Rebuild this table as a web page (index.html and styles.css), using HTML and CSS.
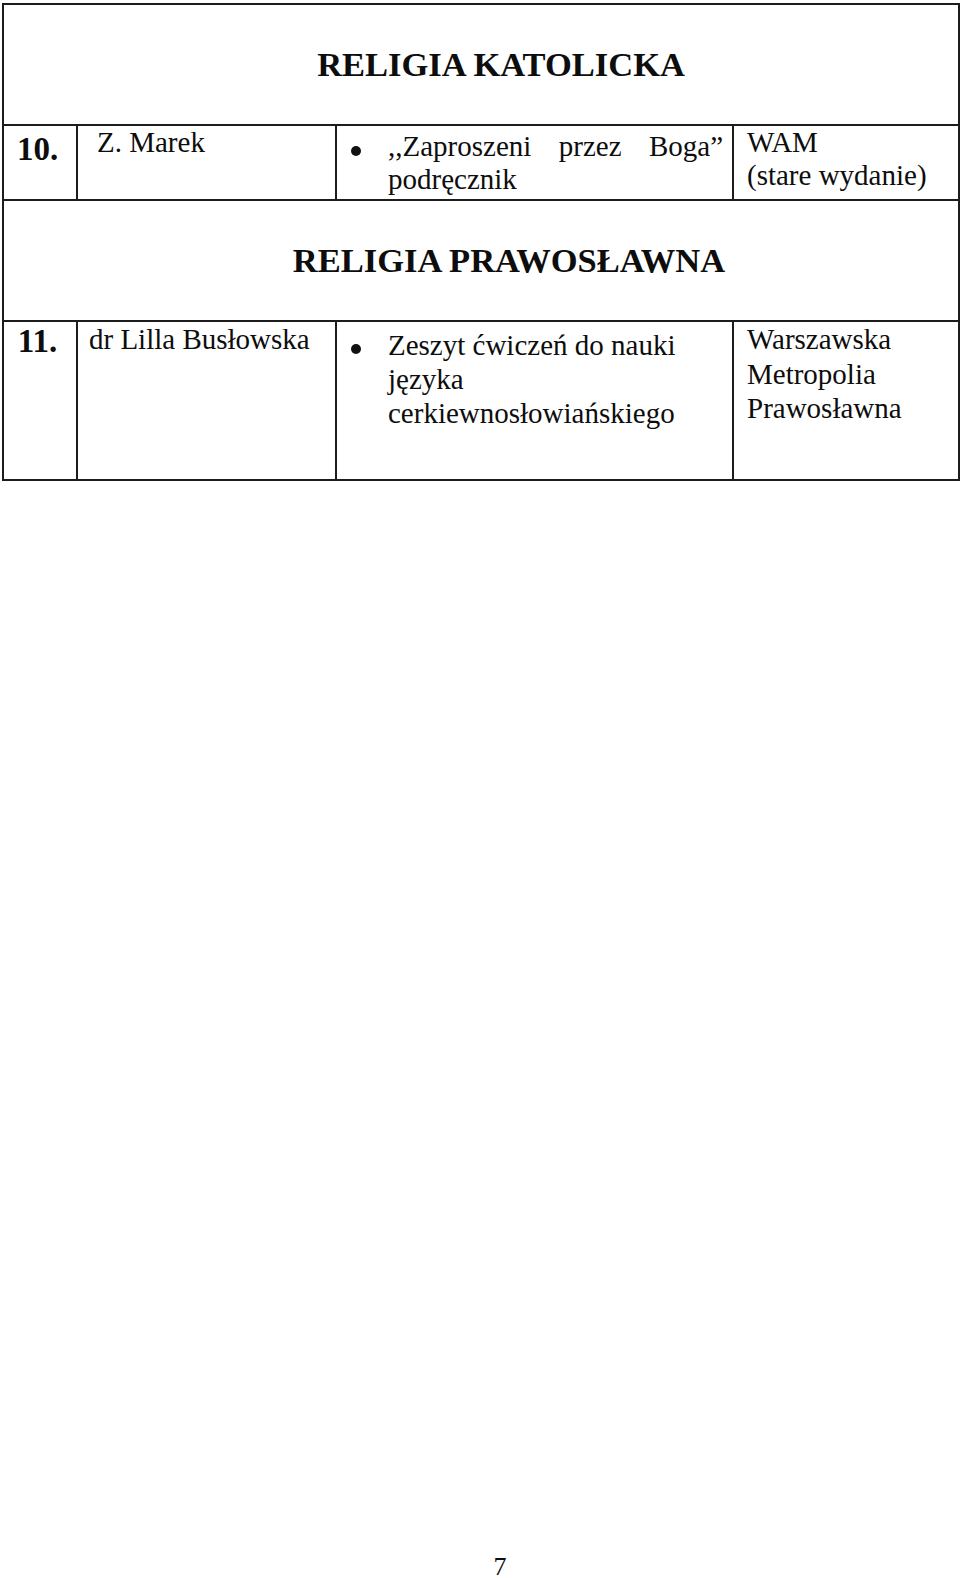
FILE: index.html
```html
<!DOCTYPE html>
<html lang="pl">
<head>
<meta charset="utf-8">
<title>Religia</title>
<link rel="stylesheet" href="styles.css">
</head>
<body>
<div class="page">
  <table class="list">
    <colgroup>
      <col class="c1"><col class="c2"><col class="c3"><col class="c4">
    </colgroup>
    <tr class="head">
      <td colspan="4" class="head-cell kat">RELIGIA KATOLICKA</td>
    </tr>
    <tr class="row r10">
      <td class="num">10.</td>
      <td class="author">Z. Marek</td>
      <td class="title">
        <div class="bullet-item"><span class="bullet"></span><span class="text justify">,,Zaproszeni przez Boga” podręcznik</span></div>
      </td>
      <td class="publisher">WAM<br>(stare wydanie)</td>
    </tr>
    <tr class="head">
      <td colspan="4" class="head-cell pra">RELIGIA PRAWOSŁAWNA</td>
    </tr>
    <tr class="row r11">
      <td class="num">11.</td>
      <td class="author">dr Lilla Busłowska</td>
      <td class="title">
        <div class="bullet-item"><span class="bullet"></span><span class="text">Zeszyt ćwiczeń do nauki języka cerkiewnosłowiańskiego</span></div>
      </td>
      <td class="publisher">Warszawska Metropolia Prawosławna</td>
    </tr>
  </table>
  <div class="page-number">7</div>
</div>
</body>
</html>
```

FILE: styles.css
```css
html, body {
  margin: 0;
  padding: 0;
  background: #ffffff;
}

body {
  font-family: "Liberation Serif", "Times New Roman", serif;
  color: #0d0d0d;
}

.page {
  display: flex;
  flex-direction: column;
  height: 1578px;
  box-sizing: border-box;
  padding: 3px 0 0 2px;
}

.list {
  border-collapse: collapse;
  table-layout: fixed;
  width: 956px;
}

.c1 { width: 74px; }
.c2 { width: 259px; }
.c3 { width: 397px; }
.c4 { width: 226px; }

.list td {
  border: 2px solid #1c1c1c;
  vertical-align: top;
  padding: 0;
  box-sizing: border-box;
}

.head-cell {
  height: 121px;
  text-align: center;
  font-weight: bold;
  font-size: 34.5px;
  line-height: 38px;
  padding-top: 40px !important;
}

.head-cell.kat { padding-left: 40px !important; }
.head-cell.pra { padding-left: 56px !important; }

.r10 td { height: 75px; }
.r11 td { height: 159px; }

.num {
  font-weight: bold;
  font-size: 33px;
  line-height: 36px;
  text-align: center;
  padding-right: 5px !important;
}

.r10 .num { padding-top: 5px !important; }
.r11 .num { padding-top: 1px !important; }

.author,
.title,
.publisher {
  font-size: 29px;
  line-height: 33px;
}

.r10 .author { padding: 0 0 0 19px !important; }
.r11 .author { padding: 1px 0 0 11px !important; }

.title { padding: 0 9px 0 14px !important; }
.r10 .title { padding-top: 4px !important; }
.r11 .title { padding-top: 6px !important; line-height: 34px; }

.bullet-item {
  display: flex;
  align-items: flex-start;
}

.bullet {
  flex: 0 0 auto;
  width: 10px;
  height: 10px;
  border-radius: 50%;
  background: #111111;
  margin: 16px 27px 0 0;
}

.text {
  flex: 1;
}

.justify {
  text-align: justify;
}

.publisher {
  padding-left: 13px !important;
}

.r10 .publisher { padding-top: 0 !important; }
.r11 .publisher { padding-top: 0 !important; line-height: 34.5px; }
.r11 .publisher { margin-top: 0; }

.page-number {
  margin-top: auto;
  margin-bottom: -2px;
  padding-left: 38px;
  text-align: center;
  font-size: 26px;
  line-height: 26px;
}
```
